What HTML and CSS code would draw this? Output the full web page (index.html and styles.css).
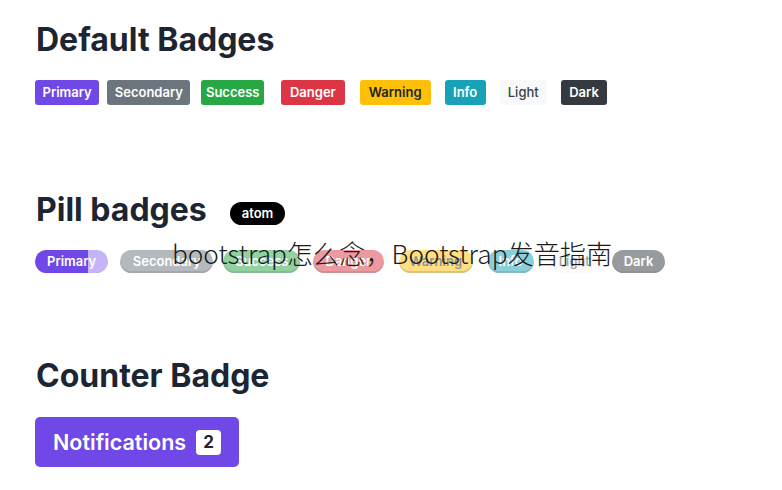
FILE: index.html
```html
<!DOCTYPE html>
<html lang="en">
<head>
<meta charset="utf-8">
<title>Badges</title>
<link rel="stylesheet" href="styles.css">
</head>
<body>
<main class="page">
  <section class="section first">
    <h2 class="title">Default Badges</h2>
    <div class="row badges">
      <span class="badge primary">Primary</span>
      <span class="badge secondary">Secondary</span>
      <span class="badge success">Success</span>
      <span class="badge danger">Danger</span>
      <span class="badge warning">Warning</span>
      <span class="badge info">Info</span>
      <span class="badge light">Light</span>
      <span class="badge dark">Dark</span>
    </div>
  </section>

  <section class="section second">
    <h2 class="title">Pill badges <span class="atom">atom</span></h2>
    <div class="row pills">
      <span class="badge pill primary-anim">Primary</span>
      <span class="badge pill secondary">Secondary</span>
      <span class="badge pill success">Success</span>
      <span class="badge pill danger">Danger</span>
      <span class="badge pill warning">Warning</span>
      <span class="badge pill info">Info</span>
      <span class="badge pill light">Light</span>
      <span class="badge pill dark">Dark</span>
    </div>
    <div class="watermark">bootstrap怎么念，Bootstrap发音指南</div>
  </section>

  <section class="section third">
    <h2 class="title">Counter Badge</h2>
    <button class="btn" type="button">Notifications <span class="count">2</span></button>
  </section>
</main>
</body>
</html>
```
FILE: styles.css
```css
* { box-sizing: border-box; }
html, body { margin: 0; background: #ffffff; }
body {
  font-family: Inter, "Noto Sans", "Liberation Sans", sans-serif;
  color: #1d2532;
}
.page {
  padding: 21px 0 0 35px;
  display: flex;
  flex-direction: column;
}
.section {
  position: relative;
  display: flex;
  flex-direction: column;
  align-items: flex-start;
  gap: 21px;
}
.second { margin-top: 86px; }
.third { margin-top: 84px; gap: 22px; }
.title {
  margin: 0;
  font-size: 32px;
  line-height: 38px;
  font-weight: 700;
  color: #1d2532;
  display: flex;
  align-items: center;
  padding-left: 1px;
}
.row {
  display: flex;
  align-items: center;
}
.badge {
  display: inline-block;
  height: 25px;
  line-height: 25px;
  padding: 0 8px;
  border-radius: 3px;
  font-size: 13px;
  font-weight: 600;
  color: #fff;
  white-space: nowrap;
}
.badges .primary { padding: 0 7.5px; }
.badges .secondary { margin-left: 8px; padding: 0 7.5px; }
.badges .success { margin-left: 11px; padding: 0 4.5px; }
.badges .danger { margin-left: 17px; padding: 0 9px; }
.badges .warning { margin-left: 15px; padding: 0 9px; }
.badges .info { margin-left: 14px; padding: 0 8.5px; }
.badges .light { margin-left: 14px; }
.badges .dark { margin-left: 14px; padding: 0 8.5px; }

.primary { background: #7048e8; }
.secondary { background: #6c757d; }
.success { background: #28a745; }
.danger { background: #dc3545; }
.warning { background: #ffc107; color: #212529; }
.info { background: #17a2b8; }
.light { background: #f8f9fa; color: #3a3f44; font-weight: 500; }
.dark { background: #343a40; }

.pills .pill {
  height: 23px;
  line-height: 23px;
  padding: 0 12px;
  border-radius: 12px;
  opacity: 0.5;
  box-shadow: inset 0 -2px 0 rgba(0, 0, 0, 0.3);
}
.pills .secondary { margin-left: 12px; padding: 0 12.5px; }
.pills .success { margin-left: 10px; padding: 0 11.5px; }
.pills .danger { margin-left: 13px; padding: 0 12.5px; }
.pills .warning { margin-left: 15px; padding: 0 10.5px; }
.pills .info { margin-left: 15px; padding: 0 11px; }
.pills .light { margin-left: 13px; box-shadow: none; }
.pills .dark { margin-left: 10px; }
.pills .primary-anim {
  opacity: 1;
  background: linear-gradient(to right, #7048e8 0, #7048e8 73%, #c5b4f6 73%, #c5b4f6 100%);
  box-shadow: none;
}
.atom {
  display: inline-block;
  margin-left: 23px;
  margin-top: 6px;
  height: 23px;
  line-height: 23px;
  padding: 0 12px;
  border-radius: 12px;
  background: #000;
  color: #fff;
  font-size: 13px;
  font-weight: 600;
}
.watermark {
  position: absolute;
  left: 137px;
  top: 47px;
  font-family: "Noto Sans CJK SC", "Noto Sans", sans-serif;
  font-weight: 300;
  font-size: 26.2px;
  line-height: 30px;
  color: #1a1a1a;
  white-space: nowrap;
}
.btn {
  display: flex;
  align-items: center;
  height: 50px;
  padding: 0 18px;
  border: none;
  border-radius: 5px;
  background: #7048e8;
  color: #fff;
  font-family: Inter, "Noto Sans", sans-serif;
  font-size: 21.5px;
  font-weight: 600;
}
.count {
  display: inline-block;
  margin-left: 10px;
  width: 25px;
  height: 25px;
  line-height: 25px;
  text-align: center;
  border-radius: 4px;
  background: #fff;
  color: #1d2532;
  font-size: 17px;
  font-weight: 700;
}
```
